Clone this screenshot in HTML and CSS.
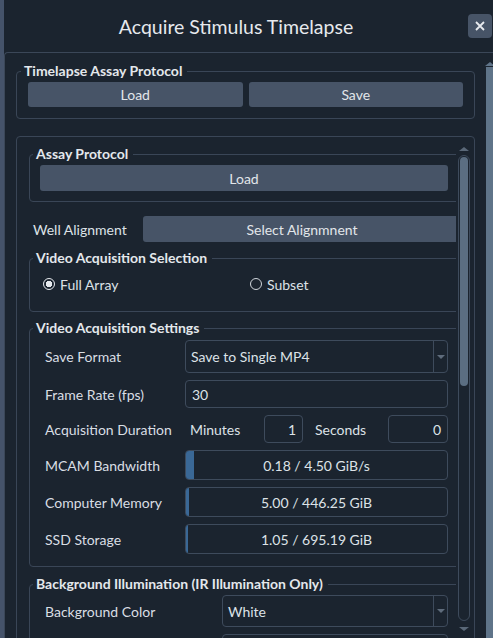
FILE: index.html
```html
<!DOCTYPE html>
<html lang="en">
<head>
  <meta charset="UTF-8">
  <title>Acquire Stimulus Timelapse</title>
  <link rel="stylesheet" href="styles.css">
</head>
<body>

  <div class="window">

    <header class="titlebar">
      <h1 class="title">Acquire Stimulus Timelapse</h1>
      <button type="button" class="close" aria-label="Close">
        <svg width="10" height="10" viewBox="0 0 10 10"><path d="M1 1 9 9M9 1 1 9" stroke="#e8ebef" stroke-width="1.8" fill="none"/></svg>
      </button>
    </header>

    <div class="frame">

      <main class="panel">

        <fieldset class="group is-top">
          <legend>Timelapse Assay Protocol</legend>
          <div class="button-row">
            <button type="button" class="button">Load</button>
            <button type="button" class="button">Save</button>
          </div>
        </fieldset>

        <div class="scrollarea">
          <div class="viewport">
            <div class="scroll-content">

              <fieldset class="group is-assay">
                <legend>Assay Protocol</legend>
                <button type="button" class="button is-wide">Load</button>
              </fieldset>

              <div class="well-row">
                <span class="label">Well Alignment</span>
                <button type="button" class="button is-align">Select Alignmnent</button>
              </div>

              <fieldset class="group is-selection">
                <legend>Video Acquisition Selection</legend>
                <div class="radio-row">
                  <label class="radio is-checked"><span class="dot"></span>Full Array</label>
                  <label class="radio"><span class="dot"></span>Subset</label>
                </div>
              </fieldset>

              <fieldset class="group is-settings">
                <legend>Video Acquisition Settings</legend>
                <div class="form">
                  <span class="label">Save Format</span>
                  <div class="combo is-tall"><span>Save to Single MP4</span><i class="drop"></i></div>

                  <span class="label">Frame Rate (fps)</span>
                  <div class="field">30</div>

                  <span class="label">Acquisition Duration</span>
                  <div class="duration">
                    <span class="unit is-min">Minutes</span>
                    <div class="spin is-min">1</div>
                    <span class="unit is-sec">Seconds</span>
                    <div class="spin is-sec">0</div>
                  </div>

                  <span class="label">MCAM Bandwidth</span>
                  <div class="meter"><div class="fill" style="width: 3%"></div><span>0.18 / 4.50 GiB/s</span></div>

                  <span class="label">Computer Memory</span>
                  <div class="meter"><div class="fill" style="width: 1%"></div><span>5.00 / 446.25 GiB</span></div>

                  <span class="label">SSD Storage</span>
                  <div class="meter"><div class="fill" style="width: 0%"></div><span>1.05 / 695.19 GiB</span></div>
                </div>
              </fieldset>

              <fieldset class="group is-illum">
                <legend>Background Illumination (IR Illumination Only)</legend>
                <div class="form is-illum">
                  <span class="label">Background Color</span>
                  <div class="combo"><span>White</span><i class="drop"></i></div>

                  <span class="label"></span>
                  <div class="field"></div>
                </div>
              </fieldset>

            </div>
          </div>

          <div class="vscroll">
            <i class="arrow is-up"></i>
            <div class="track"><div class="handle"></div></div>
            <i class="arrow is-down"></i>
          </div>
        </div>

      </main>

      <div class="outer-scroll">
        <i class="arrow is-up"></i>
        <div class="outer-handle"></div>
      </div>

    </div>
  </div>

</body>
</html>
```

FILE: styles.css
```css
html, body {
  height: 100%;
}
body {
  margin: 0;
  overflow: hidden;
  background: #45536a;
  font-family: Lato, "Liberation Sans", sans-serif;
  font-size: 14px;
  color: #dde2e7;
}
.window {
  margin-left: 4px;
  height: 100%;
  display: flex;
  flex-direction: column;
  background: #1b242f;
}

/* title bar */
.titlebar {
  display: flex;
  align-items: center;
  height: 52px;
  padding-right: 1px;
}
.title {
  flex: 1;
  margin: 0;
  text-align: center;
  font-weight: 400;
  font-size: 19.5px;
  color: #e6e9ed;
}
.close {
  display: flex;
  align-items: center;
  justify-content: center;
  width: 24px;
  height: 24px;
  padding: 0;
  border: 0;
  border-radius: 4px;
  background: #475467;
}

.frame {
  flex: 1;
  display: flex;
  border-top: 1px solid #3b4758;
  border-left: 1px solid #3b4758;
  border-top-left-radius: 4px;
  overflow: hidden;
}
.panel {
  flex: 1;
  padding: 10px 11px 0 11px;
}
.outer-scroll {
  width: 8px;
  display: flex;
  flex-direction: column;
  align-items: center;
  padding-top: 9px;
}
.outer-scroll .arrow.is-up {
  border-bottom-color: #5f7489;
  margin-bottom: 1px;
}
.outer-handle {
  flex: 1;
  width: 8px;
  background: #5f7489;
}

/* group boxes */
.group {
  margin: 0;
  min-width: 0;
  border: 1px solid #3a4657;
  border-radius: 4px;
}
.group legend {
  padding: 0 5px 0 3px;
  font-weight: 700;
  line-height: 16px;
  color: #e4e8ec;
}
.group.is-top {
  padding: 3px 11px 11px 11px;
}
.group.is-top legend {
  margin-left: -7px;
}
.button-row {
  display: flex;
  gap: 6px;
}
.button {
  flex: 1;
  height: 25px;
  padding: 0;
  border: 0;
  border-radius: 3px;
  background: #475467;
  color: #e2e6ea;
  font-family: inherit;
  font-size: 14px;
}

.scrollarea {
  display: flex;
  height: 520px;
  margin-top: 17px;
  border: 1px solid #3a4657;
  border-radius: 4px;
  padding-right: 3px;
}
.viewport {
  width: 439px;
  overflow: hidden;
}
.scroll-content {
  width: 432px;
  padding: 9px 0 0 12px;
}
.scroll-content .group {
  padding: 3px 12px 10px 10px;
}
.scroll-content .group legend {
  margin-left: -7px;
}
.button.is-wide {
  display: block;
  width: 100%;
  height: 26px;
}

.well-row {
  display: flex;
  align-items: center;
  margin-top: 14px;
  height: 26px;
}
.well-row .label {
  width: 110px;
  padding-left: 4px;
}
.button.is-align {
  flex: 1;
  height: 26px;
  border-radius: 3px 0 0 3px;
}

.group.is-selection {
  margin-top: 8px;
  padding: 8px 12px 17px 13px;
}
.group.is-selection legend {
  margin-left: -10px;
}
.radio-row {
  display: grid;
  grid-template-columns: 207px 1fr;
  height: 20px;
  align-items: center;
}
.radio {
  display: flex;
  align-items: center;
  gap: 5px;
}
.dot {
  box-sizing: border-box;
  width: 12px;
  height: 12px;
  border: 1px solid #cfd5db;
  border-radius: 50%;
}
.radio.is-checked .dot {
  border-color: #e6e9ed;
  background: radial-gradient(circle, #e6e9ed 0 3px, transparent 3.5px);
}

.group.is-settings {
  margin-top: 8px;
  padding: 4px 12px 12px 15px;
}
.group.is-settings legend {
  margin-left: -12px;
}
.form {
  display: grid;
  grid-template-columns: 140px 1fr;
  row-gap: 7px;
  align-items: center;
}
.form .label {
  color: #d9dee4;
}
.combo,
.field,
.spin,
.meter {
  box-sizing: border-box;
  height: 28px;
  border: 1px solid #3e4b5c;
  border-radius: 4px;
  display: flex;
  align-items: center;
}
.combo {
  height: 32px;
  padding-left: 5px;
}
.combo.is-tall {
  height: 33px;
}
.combo span {
  flex: 1;
}
.drop {
  position: relative;
  width: 13px;
  height: 100%;
  border-left: 1px solid #3e4b5c;
}
.drop::after {
  content: "";
  position: absolute;
  left: 3px;
  top: 50%;
  margin-top: -2px;
  border: 4px solid transparent;
  border-top: 4px solid #5f6c7c;
  border-bottom: 0;
}
.field {
  padding-left: 6px;
}
.duration {
  display: flex;
  align-items: center;
}
.unit.is-min {
  width: 79px;
  padding-left: 5px;
  box-sizing: border-box;
}
.unit.is-sec {
  width: 85px;
  padding-left: 12px;
  box-sizing: border-box;
}
.spin {
  justify-content: flex-end;
  padding-right: 6px;
}
.spin.is-min {
  width: 39px;
}
.spin.is-sec {
  flex: 1;
}
.meter {
  position: relative;
  height: 30px;
  justify-content: center;
  overflow: hidden;
}
.meter .fill {
  position: absolute;
  left: 0;
  top: 0;
  bottom: 0;
  min-width: 2px;
  background: #3a6896;
}
.meter span {
  position: relative;
}

.group.is-illum {
  margin-top: 9px;
  padding: 3px 12px 10px 15px;
}
.group.is-illum legend {
  margin-left: -12px;
}
.form.is-illum {
  grid-template-columns: 177px 1fr;
}

/* scroll bar */
.vscroll {
  width: 14px;
  display: flex;
  flex-direction: column;
  align-items: center;
  padding: 10px 0 0 1px;
}
.arrow {
  display: block;
  width: 0;
  height: 0;
  border: 5px solid transparent;
}
.arrow.is-up {
  border-top: 0;
  border-bottom: 4px solid #5a6878;
}
.arrow.is-down {
  border-bottom: 0;
  border-top: 4px solid #5a6878;
  margin-top: 6px;
}
.track {
  box-sizing: border-box;
  width: 12px;
  height: 466px;
  margin-top: 4px;
  border: 1px solid #3e4b5c;
  border-radius: 6px;
  padding: 1px;
}
.handle {
  height: 229px;
  border-radius: 4px;
  background: #5b6e82;
}
```
